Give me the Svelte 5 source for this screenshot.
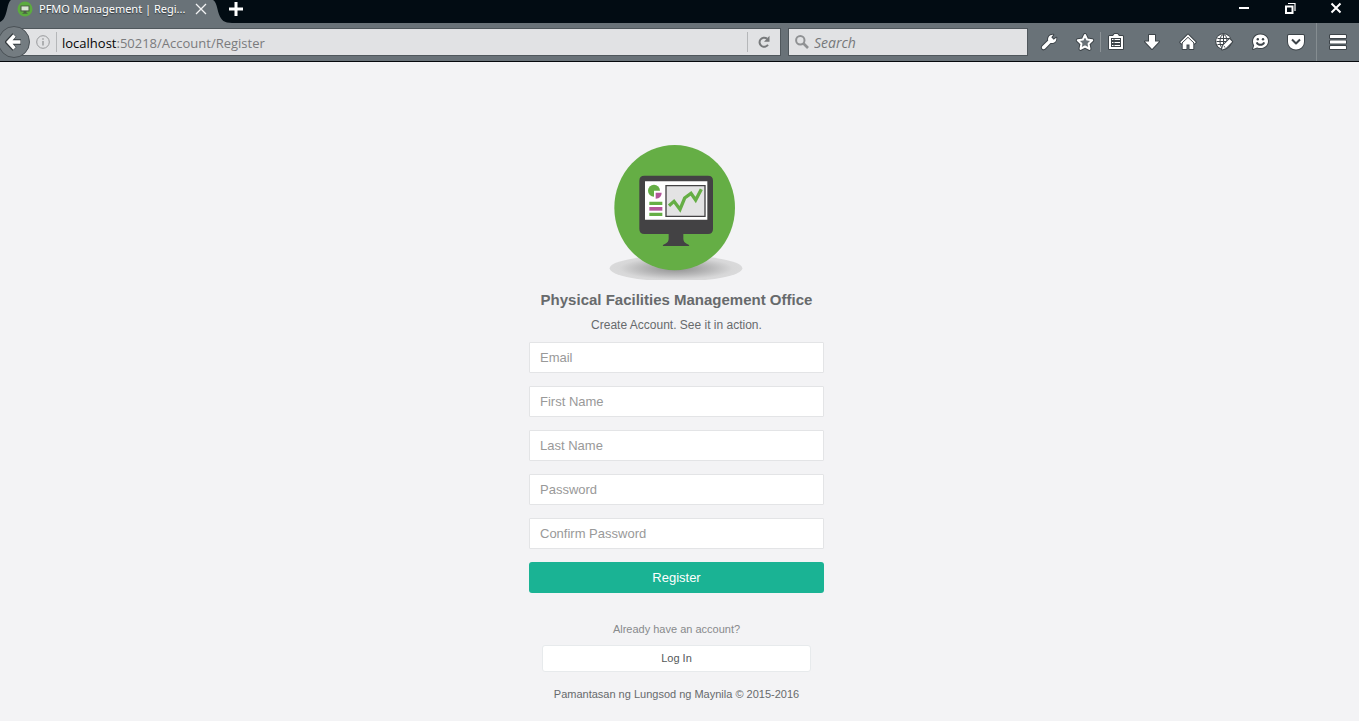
<script>
  const fields = [
    { id: 'email', label: 'Email', type: 'email' },
    { id: 'first-name', label: 'First Name', type: 'text' },
    { id: 'last-name', label: 'Last Name', type: 'text' },
    { id: 'password', label: 'Password', type: 'password' },
    { id: 'confirm-password', label: 'Confirm Password', type: 'password' }
  ];
</script>

<div class="browser">
  <header class="titlebar">
    <svg class="tab-start" viewBox="0 0 12 23" aria-hidden="true"><path d="M12 0H11C6 4 8 19 0 22V23H12z" fill="#697278" /></svg>
    <div class="tab">
      <svg class="favicon" viewBox="0 0 16 16" aria-hidden="true">
        <circle cx="8" cy="8" r="7.500" fill="#5cab3f" />
        <path d="M3.500 4.500h9v6h-3v1.500h1v.8h-5V12h1v-1.500h-3z" fill="#4b5d45" />
        <path d="M4.500 5.400h7v4h-7z" fill="#d9e5d2" />
      </svg>
      <span class="tab-title">PFMO Management | Regi...</span>
      <button class="plain tab-close" aria-label="Close tab">
        <svg width="12" height="12" viewBox="0 0 12 12"><path d="M1 1l10 10M11 1L1 11" stroke="#f2f3f4" stroke-width="1.300" /></svg>
      </button>
    </div>
    <svg class="tab-end" viewBox="0 0 24 23" aria-hidden="true"><path d="M0 0H5C11 3 8 20 19 22.500L24 23H0z" fill="#697278" /></svg>
    <button class="plain new-tab" aria-label="New tab">
      <svg width="14" height="14" viewBox="0 0 14 14"><path d="M7 0v14M0 7h14" stroke="#fff" stroke-width="3" /></svg>
    </button>
    <div class="window-controls">
      <button class="plain" aria-label="Minimize"><svg width="12" height="12" viewBox="0 0 12 12"><path d="M1 6h10" stroke="#fff" stroke-width="2" /></svg></button>
      <button class="plain" aria-label="Restore"><svg width="12" height="12" viewBox="0 0 12 12" fill="none" stroke="#fff"><path d="M2 4.500h6.500V11H2z" stroke-width="2" /><path d="M4 1.500h7V9" stroke-width="1.200" /></svg></button>
      <button class="plain" aria-label="Close window"><svg width="12" height="12" viewBox="0 0 12 12"><path d="M1.500 1.500l9 9M10.500 1.500l-9 9" stroke="#fff" stroke-width="2" /></svg></button>
    </div>
  </header>

  <nav class="toolbar" aria-label="Browser toolbar">
    <button class="back" aria-label="Back">
      <svg width="18" height="18" viewBox="0 0 18 18"><path d="M9.500 2L3 9l6.500 7M4 9h12" fill="none" stroke="#32383c" stroke-width="5.500" /><path d="M9.500 2.500L3.500 9l6 6.500M4 9h11.500" fill="none" stroke="#fff" stroke-width="3.500" /></svg>
    </button>
    <div class="box address">
      <svg class="info" viewBox="0 0 14 14" fill="none" stroke="#97999b"><circle cx="7" cy="7" r="6.300" /><path d="M7 6v4.500M7 3.300v1.500" stroke-width="1.400" /></svg>
      <i class="rule"></i>
      <a class="url" href="#register"><span>localhost</span>:50218/Account/Register</a>
      <i class="rule"></i>
      <button class="plain reload" aria-label="Reload">
        <svg width="14" height="14" viewBox="0 0 14 14"><path d="M11 9.800A4.600 4.600 0 1 1 10 3.600" fill="none" stroke="#77797b" stroke-width="2" /><path d="M12.500.8v6H7z" fill="#77797b" /></svg>
      </button>
    </div>
    <div class="box search">
      <svg width="14" height="14" viewBox="0 0 14 14" fill="none" stroke="#8f9193"><circle cx="5.300" cy="5.300" r="4.200" stroke-width="2" /><path d="M8.500 8.500L13 13" stroke-width="2.600" /></svg>
      <input aria-label="Search" placeholder="Search" />
    </div>
    <div class="actions">
      <button class="plain" aria-label="Developer tools">
        <svg class="icon" viewBox="0 0 18 18"><path d="M2.300 13.200L8.200 7.500C7.500 4.300 9.700 1.300 13.300 1.700L11.300 4.300 13.700 6.700 16.300 4.700C16.800 8.500 13.700 10.800 10.500 9.900L4.900 15.800C3 17.300.8 15 2.300 13.200z" /></svg>
      </button>
      <div class="group">
        <button class="plain" aria-label="Bookmark this page">
          <svg class="icon" viewBox="0 0 18 18"><path class="halo" d="M9 2L11.200 6.600 16.200 7.300 12.600 10.800 13.500 15.900 9 13.500 4.500 15.900 5.400 10.800 1.800 7.300 6.800 6.600z" /><path class="star" d="M9 2L11.200 6.600 16.200 7.300 12.600 10.800 13.500 15.900 9 13.500 4.500 15.900 5.400 10.800 1.800 7.300 6.800 6.600z" /></svg>
        </button>
        <i class="rule tool-rule"></i>
        <button class="plain" aria-label="Bookmarks">
          <svg class="icon" viewBox="0 0 18 18"><path d="M2.500 3H6L7.500 1h3L12 3h3.500Q16 3 16 3.500v12Q16 16 15.500 16h-13Q2 16 2 15.500v-12Q2 3 2.500 3z" /><path class="dark" d="M4 5h10v9H4z" /><path class="white-line" d="M5 6.500h1.500M7.500 6.500H13M5 9.500h1.500M7.500 9.500H13M5 12.500h1.500M7.500 12.500H13" /></svg>
        </button>
      </div>
      <button class="plain" aria-label="Downloads">
        <svg class="icon" viewBox="0 0 18 18"><path d="M6 2h6v6.500h4L9 16 2 8.500H6z" /></svg>
      </button>
      <button class="plain" aria-label="Home">
        <svg class="icon" viewBox="0 0 18 18"><path d="M9 1.500L1.200 9.300 2.500 10.600 3.700 9.500V16H7.500V11.500h3V16h3.800V9.500l1.200 1.100 1.300-1.300z" /><path class="dark-line" d="M3 10L9 4.300l6 5.700" /></svg>
      </button>
      <button class="plain" aria-label="Web tools">
        <svg class="icon" viewBox="0 0 18 18"><circle cx="8.500" cy="8.500" r="7.300" /><path class="dark-line" d="M2.500 5.500h12M1.500 8.500h14M2.500 11.500h12M8.500 1.500v14" /><ellipse class="dark-line" cx="8.500" cy="8.500" rx="3.500" ry="7" /><path d="M7 16.500l1-4 6.500-6.500 2.700 2.700-6.500 6.500z" /><path class="dark-line" d="M8.700 13l1.700 1.700" /></svg>
      </button>
      <button class="plain" aria-label="Chat">
        <svg class="icon" viewBox="0 0 18 18"><path d="M9.500 1.500C14 1.500 17 4.500 17 8.200S14 15 9.500 15c-1.300 0-2.500-.2-3.400-.6L2 16l1.200-3.500C.3 7.500 3 1.500 9.500 1.500z" /><path class="dark-line bold" d="M5.700 9.300c1.500 3.400 6 3.400 7.500 0" /><circle class="dark" cx="6.800" cy="6.300" r="1.200" /><circle class="dark" cx="12" cy="6.300" r="1.200" /></svg>
      </button>
      <button class="plain" aria-label="Pocket">
        <svg class="icon" viewBox="0 0 18 18"><path d="M2 2h14q1 0 1 1v5.500c0 10.500-16 10.500-16 0V3q0-1 1-1z" /><path class="dark-line bold" d="M5 6.500l4 4 4-4" /></svg>
      </button>
      <i class="rule menu-rule"></i>
      <button class="plain menu" aria-label="Open menu">
        <svg class="icon" viewBox="0 0 18 18"><rect x="1" y="2" width="16" height="3" rx=".5" /><rect x="1" y="7.500" width="16" height="3" rx=".5" /><rect x="1" y="13" width="16" height="3" rx=".5" /></svg>
      </button>
    </div>
  </nav>

  <main>
    <svg class="logo" viewBox="23 27 411 405" role="img" aria-label="Physical Facilities Management Office logo">
      <defs>
        <radialGradient id="shade">
          <stop offset="0" stop-color="#8f8f90" />
          <stop offset=".5" stop-color="#b7b7b8" />
          <stop offset=".85" stop-color="#d7d7d8" />
          <stop offset="1" stop-color="#dadadb" />
        </radialGradient>
      </defs>
      <ellipse cx="227" cy="397" rx="199" ry="39" fill="url(#shade)" />
      <ellipse cx="223" cy="215" rx="181" ry="188" fill="#65ae45" />
      <path d="M132 119h191q15 0 15 15v145q0 15-15 15h-74v14q0 10 10 15 8 3 8 7h-80q0-4 8-7 10-5 10-15v-14h-73q-15 0-15-15V134q0-15 15-15z" fill="#434244" />
      <path d="M134 136h187v115H134z" fill="#fff" />
      <path d="M197 149h117v92H197z" fill="#e3e3e4" stroke="#434244" stroke-width="4" />
      <path d="M161 164V146a18 18 0 1 0 0 36z" fill="#65ae45" />
      <path d="M161 146a18 18 0 0 1 18 18h-18z" fill="#65ae45" />
      <path d="M166 170h18q0 17-18 18z" fill="#b2569a" />
      <path d="M147 197h39v10h-39zM147 230h39v10h-39z" fill="#65ae45" />
      <path d="M147 213h39v11h-39z" fill="#b2569a" />
      <path d="M206 209l15-13 18 24 14-34 19-14 14 20 17-32" fill="none" stroke="#65ae45" stroke-width="10" />
    </svg>
    <h1>Physical Facilities Management Office</h1>
    <p class="lead">Create Account. See it in action.</p>
    <form id="register" onsubmit={(e) => e.preventDefault()}>
      {#each fields as field (field.id)}
        <input id={field.id} type={field.type} placeholder={field.label} aria-label={field.label} />
      {/each}
      <button class="submit">Register</button>
    </form>
    <p class="already">Already have an account?</p>
    <a class="login" href="#login">Log In</a>
    <p class="copyright">Pamantasan ng Lungsod ng Maynila © 2015-2016</p>
  </main>
</div>

<style>
  :global(body) {
    margin: 0;
    background: #f3f3f5;
  }
  * {
    box-sizing: border-box;
  }
  .browser {
    min-height: 100vh;
    overflow: hidden;
    font-family: 'Liberation Sans', Arial, sans-serif;
    color: #676a6c;
  }
  .plain {
    display: flex;
    align-items: center;
    justify-content: center;
    padding: 0;
    border: 0;
    background: none;
  }
  .titlebar {
    display: flex;
    align-items: flex-start;
    height: 23px;
    background: #020c13;
  }
  .tab {
    display: flex;
    align-items: center;
    width: 196px;
    height: 23px;
    padding: 0 0 6px 5px;
    background: #697278;
  }
  .tab-start {
    width: 12px;
    height: 23px;
  }
  .tab-end {
    width: 24px;
    height: 23px;
  }
  .favicon {
    width: 16px;
    height: 16px;
  }
  .tab-title {
    flex: 1;
    margin-left: 6px;
    font: 11px/16px 'Noto Sans', sans-serif;
    color: #fff;
    white-space: nowrap;
    text-shadow: 0 1px 1px #30363a;
  }
  .tab-close {
    width: 14px;
    height: 16px;
  }
  .new-tab {
    width: 24px;
    height: 18px;
    margin-left: -8px;
  }
  .window-controls {
    display: flex;
    margin-left: auto;
  }
  .window-controls button {
    width: 46px;
    height: 15px;
  }
  .toolbar {
    display: flex;
    align-items: center;
    height: 39px;
    background: #697278;
    border-bottom: 1px solid #05080c;
  }
  .back {
    display: flex;
    align-items: center;
    justify-content: center;
    z-index: 1;
    width: 32px;
    height: 32px;
    margin: 0 -15px 0 -2px;
    padding: 0;
    border: 1px solid #4a5156;
    border-radius: 50%;
    background: #747c81;
  }
  .box {
    display: flex;
    align-items: center;
    height: 28px;
    border: 1px solid #4f575c;
    background: #e1e2e4;
    min-width: 0;
  }
  .address {
    flex: 1 1 527px;
    padding-left: 20px;
  }
  .info {
    width: 14px;
    height: 14px;
    margin-right: 6px;
  }
  .rule {
    width: 1px;
    height: 20px;
    background: #b5b7b9;
  }
  .url {
    flex: 1;
    margin-left: 5px;
    padding-top: 2px;
    font: 13px/20px 'Open Sans', sans-serif;
    color: #7a7b7d;
    text-decoration: none;
    white-space: nowrap;
    overflow: hidden;
  }
  .url span {
    color: #050505;
  }
  .reload {
    width: 32px;
    height: 24px;
  }
  .search {
    flex: 1 1 0;
    max-width: 240px;
    margin-left: 7px;
    padding-left: 6px;
  }
  .search input {
    flex: 1;
    min-width: 0;
    margin-left: 5px;
    padding: 2px 0 0;
    border: 0;
    outline: 0;
    background: none;
    font: italic 14px/20px 'Open Sans', sans-serif;
  }
  .search input::placeholder {
    color: #76787a;
    opacity: 1;
  }
  .actions {
    display: flex;
    flex: none;
    align-items: center;
    gap: 6px;
    width: 325px;
    margin-left: 6px;
  }
  .actions button {
    flex: none;
    width: 30px;
    height: 30px;
  }
  .group {
    display: flex;
    align-items: center;
  }
  .tool-rule {
    background: #8c9397;
  }
  .menu-rule {
    flex: none;
    height: 38px;
    margin: 0 0 0 -1px;
    background: #858d91;
  }
  .icon {
    width: 18px;
    height: 18px;
    overflow: visible;
    fill: #fff;
    stroke: #3d4449;
    stroke-width: 2px;
    stroke-linejoin: round;
    paint-order: stroke;
  }
  .icon .halo {
    fill: none;
    stroke-width: 4px;
  }
  .icon .star {
    fill: #697278;
    stroke: #fff;
    stroke-width: 2px;
    paint-order: normal;
  }
  .icon .dark {
    fill: #3d4449;
    stroke: none;
  }
  .icon .dark-line {
    fill: none;
    stroke-width: 1px;
  }
  .icon .bold {
    stroke-width: 2px;
  }
  .icon .white-line {
    fill: none;
    stroke: #fff;
    stroke-width: 1px;
  }
  main {
    display: flex;
    flex-direction: column;
    align-items: center;
    padding: 83px 6px 20px 0;
  }
  .logo {
    width: 137px;
    height: 135px;
  }
  h1 {
    margin: 12px 0 0;
    font-size: 15px;
    line-height: 16px;
  }
  p {
    margin: 0;
  }
  .lead {
    margin-top: 9px;
    font-size: 12px;
    line-height: 16px;
  }
  form {
    display: flex;
    flex-direction: column;
    gap: 13px;
    width: 295px;
    margin-top: 9px;
  }
  form input {
    height: 31px;
    padding: 0 10px;
    border: 1px solid #e3e4e6;
    border-radius: 1px;
    background: #fff;
    font: 13px/18px 'Liberation Sans', Arial, sans-serif;
    color: #676a6c;
  }
  form input::placeholder {
    color: #999;
    opacity: 1;
  }
  .submit {
    height: 31px;
    border: 0;
    border-radius: 3px;
    background: #1ab394;
    color: #fff;
    font: 13px/18px 'Liberation Sans', Arial, sans-serif;
  }
  .already {
    margin-top: 28px;
    font-size: 11px;
    line-height: 16px;
    color: #888a8c;
  }
  .login {
    width: 269px;
    margin-top: 8px;
    padding: 5px 0;
    border: 1px solid #e7eaec;
    border-radius: 3px;
    background: #fff;
    font-size: 11px;
    line-height: 15px;
    text-align: center;
    text-decoration: none;
    color: #55585a;
  }
  .copyright {
    margin-top: 14px;
    font-size: 11px;
    line-height: 16px;
  }
</style>
